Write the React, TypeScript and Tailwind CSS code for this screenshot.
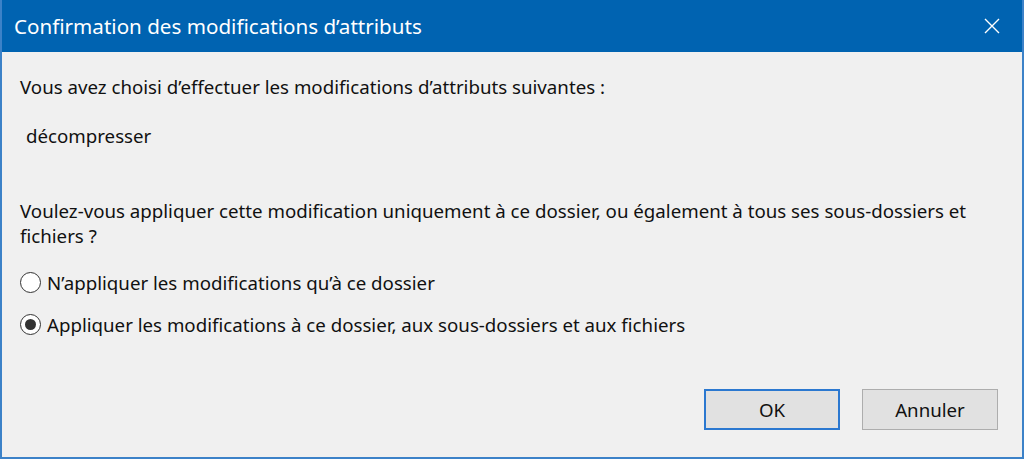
import React, { useState } from 'react';

function Radio({ checked }: { checked: boolean }) {
  return (
    <span className="flex h-[21px] w-[21px] shrink-0 items-center justify-center rounded-full border-[1.5px] border-[#333333] bg-white">
      {checked && <span className="h-[11px] w-[11px] rounded-full bg-[#333333]" />}
    </span>
  );
}

export default function App() {
  const [choice, setChoice] = useState<'folder' | 'all'>('all');

  return (
    <div className="flex h-[459px] w-[1024px] flex-col border-x-2 border-b-2 border-[#3c82c8] bg-[#f0f0f0] font-['Segoe_UI','Noto_Sans',sans-serif] text-[#111111]">
      {/* Title bar */}
      <div className="flex h-[52px] shrink-0 items-center justify-between bg-[#0063b1] pl-[12px] pr-[22px] text-white">
        <span className="text-[20.6px]">Confirmation des modifications d’attributs</span>
        <svg width="16" height="16" viewBox="0 0 16 16" className="text-white">
          <path d="M1 1 L15 15 M15 1 L1 15" stroke="currentColor" strokeWidth="1.4" />
        </svg>
      </div>

      {/* Body */}
      <div className="flex flex-1 flex-col px-[18px] text-[18.7px] leading-[25px]">
        <p className="mt-[22px]">Vous avez choisi d’effectuer les modifications d’attributs suivantes :</p>
        <p className="mt-[24px] pl-[6px]">décompresser</p>
        <p className="mt-[50px] pr-[20px]">
          Voulez-vous appliquer cette modification uniquement à ce dossier, ou également à tous ses sous-dossiers et
          fichiers ?
        </p>

        <div className="mt-[22px] flex flex-col gap-[17px]">
          <label className="flex items-center gap-[6px]" onClick={() => setChoice('folder')}>
            <Radio checked={choice === 'folder'} />
            <span>N’appliquer les modifications qu’à ce dossier</span>
          </label>
          <label className="flex items-center gap-[6px]" onClick={() => setChoice('all')}>
            <Radio checked={choice === 'all'} />
            <span>Appliquer les modifications à ce dossier, aux sous-dossiers et aux fichiers</span>
          </label>
        </div>

        <div className="mt-auto mb-[27px] flex justify-end gap-[22px] pr-[6px]">
          <button className="h-[41px] w-[136px] border-2 border-[#2b78d0] bg-[#e1e1e1] text-[18.7px]">OK</button>
          <button className="h-[41px] w-[136px] border border-[#adadad] bg-[#e1e1e1] text-[18.7px]">Annuler</button>
        </div>
      </div>
    </div>
  );
}
